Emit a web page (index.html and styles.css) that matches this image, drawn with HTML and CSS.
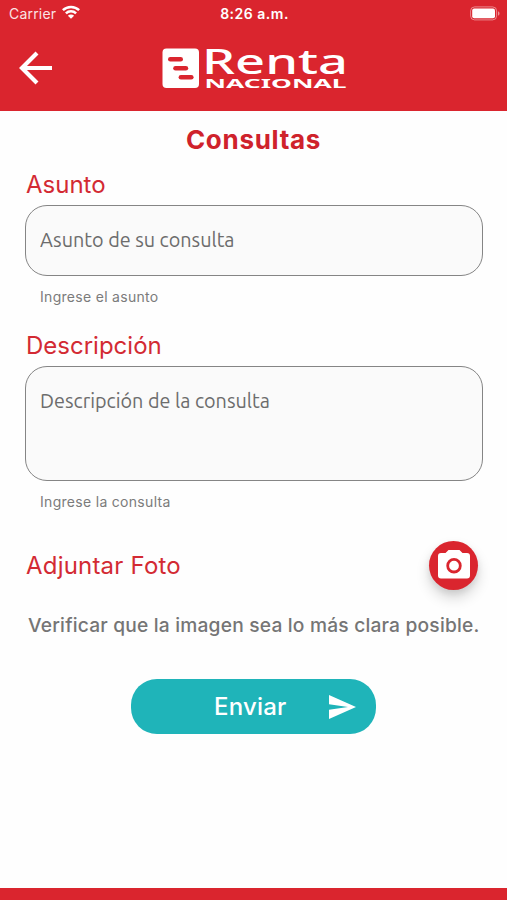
FILE: index.html
```html
<!DOCTYPE html>
<html lang="es">
<head>
    <meta charset="UTF-8">
    <meta name="viewport" content="width=device-width, initial-scale=1">
    <title>Consultas - Renta Nacional</title>
    <link rel="stylesheet" href="styles.css">
</head>
<body>

<header class="header">
    <!-- Barra de estado -->
    <div class="status">
        <div class="carrier">
            <span>Carrier</span>
            <svg class="wifi" viewBox="0 0 18 14" fill="none" stroke="#fff" stroke-width="2.5">
                <path d="M0.9 5.2a11.6 11.6 0 0 1 16.2 0"/>
                <path d="M3.9 8.4a7.3 7.3 0 0 1 10.2 0"/>
                <path d="M9 13.8L5.9 10.7a4.4 4.4 0 0 1 6.2 0z" fill="#fff" stroke="none"/>
            </svg>
        </div>
        <span class="hour">8:26 a.m.</span>
        <svg class="battery" viewBox="0 0 30 15">
            <rect x="0.6" y="0.9" width="26" height="13" rx="4" fill="none" stroke="#fff" stroke-opacity=".45"/>
            <rect x="2.2" y="2.6" width="22.8" height="9.6" rx="2" fill="#fff"/>
            <path d="M28 5.2c2 .8 2 3.7 0 4.5z" fill="#fff" fill-opacity=".5"/>
        </svg>
    </div>

    <div class="navbar">
        <svg class="back" viewBox="0 0 34 34" fill="none" stroke="#fff" stroke-width="4.2">
            <path d="M33 17H4M18 2L3 17l15 15"/>
        </svg>
        <svg class="logo" viewBox="0 0 186 42">
            <rect x="0.5" y="0.5" width="36.5" height="39.5" rx="4" fill="#fff"/>
            <g fill="#da252e">
                <rect x="6" y="9" width="15" height="4.6" rx="2.3"/>
                <rect x="11.2" y="18" width="15" height="4.6" rx="2.3"/>
                <rect x="16.6" y="27" width="15" height="4.6" rx="2.3"/>
            </g>
            <text class="logo-name" x="40" y="26" textLength="146" lengthAdjust="spacingAndGlyphs">Renta</text>
            <text class="logo-sub" x="42.500" y="39.800" textLength="142" lengthAdjust="spacingAndGlyphs">NACIONAL</text>
        </svg>
    </div>
</header>

<main class="content">
    <h1>Consultas</h1>

    <label class="label" for="asunto">Asunto</label>
    <input class="field" type="text" id="asunto" placeholder="Asunto de su consulta">
    <p class="helper">Ingrese el asunto</p>

    <label class="label" for="descripcion">Descripción</label>
    <textarea class="field field-area" id="descripcion" placeholder="Descripción de la consulta"></textarea>
    <p class="helper">Ingrese la consulta</p>

    <div class="photo">
        <span class="label photo-label">Adjuntar Foto</span>
        <button class="btn-photo" aria-label="Adjuntar Foto">
            <svg viewBox="0 0 32 29">
                <path fill="#fff" d="M10.5 0h11l3 3H29a3 3 0 0 1 3 3v19.500a3 3 0 0 1-3 3H3a3 3 0 0 1-3-3V6a3 3 0 0 1 3-3h4.500z"/>
                <circle cx="16" cy="15.700" r="6.300" fill="#fff" stroke="#da252e" stroke-width="2.800"/>
            </svg>
        </button>
    </div>
    <p class="note">Verificar que la imagen sea lo más clara posible.</p>

    <button class="btn-send">
        <span>Enviar</span>
        <svg viewBox="0 0 27 24"><path fill="#fff" d="M0 24l27-12L0 0v9.300L19 12 0 14.700z"/></svg>
    </button>
</main>

<footer class="footer"></footer>

</body>
</html>
```
FILE: styles.css
```css
* { box-sizing: border-box; }
body { margin: 0; height: 900px; display: flex; flex-direction: column; background: #fefefe; font-family: Inter, "Liberation Sans", sans-serif; overflow: hidden; }
h1, p { margin: 0; }
svg { display: block; }
button { border: none; padding: 0; font-family: inherit; }

.header { height: 110.5px; flex: none; background: #da252e; color: #fff; }
.status { height: 28px; padding: 0 7px 2px 9px; display: grid; grid-template-columns: 1fr auto 1fr; align-items: center; font-size: 14px; }
.carrier { display: flex; align-items: center; gap: 6px; letter-spacing: 0.2px; color: #fbe3e4; }
.wifi { width: 18px; height: 14px; margin-top: -2px; }
.hour { font-weight: 600; letter-spacing: 0.5px; }
.battery { width: 30px; height: 15px; justify-self: end; }
.navbar { height: 80px; padding: 0 19px; display: grid; grid-template-columns: 143px auto; align-items: center; }
.back { width: 34px; height: 34px; }
.logo { width: 186px; height: 42px; margin-top: 2px; overflow: visible; }
.logo-name { font-family: "Noto Sans", sans-serif; font-size: 34px; font-weight: 500; fill: #fff; }
.logo-sub { font-family: "Noto Sans", sans-serif; font-size: 12px; font-weight: 700; fill: #fff; }

.content { flex: 1; padding: 13px 25px 0; }
h1 { font-size: 26px; line-height: 32px; font-weight: 700; letter-spacing: 0.7px; text-align: center; color: #cf222b; margin-bottom: 14.500px; }
.label { display: block; padding-left: 1px; font-size: 24px; line-height: 29px; color: #d32a33; margin-bottom: 6px; }
.field { display: block; width: 458px; height: 71px; padding: 0 14px 2px; border: 1.5px solid #858585; border-radius: 22px; background: #fafafa; outline: none; resize: none; font-family: Ubuntu, "Noto Sans", sans-serif; font-size: 19.800px; }
.field::placeholder { color: #6c6c6c; opacity: 1; }
.field-area { height: 115px; padding-top: 20px; line-height: 28px; overflow: hidden; }
.helper { margin: 11px 0 24px 15px; font-size: 14px; line-height: 20px; color: #7b7b7b; letter-spacing: 0.3px; }

.photo { display: flex; justify-content: space-between; align-items: center; height: 49px; margin-top: 29px; padding-right: 4px; }
.photo-label { margin: 0; letter-spacing: 0.2px; }
.btn-photo { width: 49px; height: 49px; border-radius: 50%; background: #da252e; display: flex; align-items: center; justify-content: center; box-shadow: 0 8px 14px rgba(0,0,0,0.16), 0 3px 6px rgba(0,0,0,0.08); }
.btn-photo svg { width: 32px; height: 29px; margin-top: -3px; }
.note { margin: 21px 0 40px 3px; font-size: 19.200px; line-height: 28px; font-weight: 500; letter-spacing: 0.2px; color: #757575; white-space: nowrap; }

.btn-send { width: 245px; height: 55px; margin: 0 auto; padding: 0 20px 0 83px; border-radius: 26px; background: #1fb4b9; color: #fff; display: flex; align-items: center; justify-content: space-between; font-size: 24px; font-weight: 500; letter-spacing: 0.2px; }
.btn-send svg { width: 27px; height: 24px; }
.footer { height: 12px; flex: none; background: #da252e; }
```
